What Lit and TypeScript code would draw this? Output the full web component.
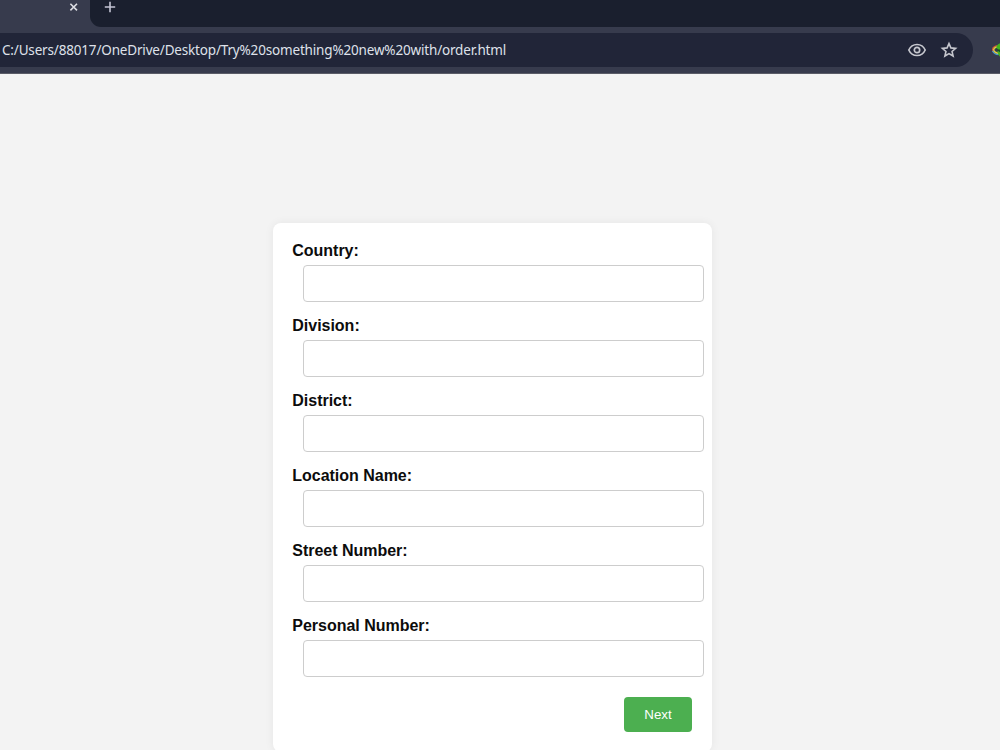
import { LitElement, html, css } from "lit";
import { customElement } from "lit/decorators.js";

@customElement("browser-chrome")
class BrowserChrome extends LitElement {
  static styles = css`
    :host { display: block; height: 74px; background: #373b4d; border-bottom: 1px solid #5a5c67; box-sizing: border-box; overflow: hidden; font-family: "Noto Sans", "Open Sans", sans-serif; }
    .tabs { display: flex; height: 27px; }
    .tab { width: 90px; display: flex; justify-content: flex-end; }
    .strip { flex: 1; background: #1a1f2e; border-bottom-left-radius: 11px; }
    svg { display: block; flex: none; }
    .bar { display: flex; height: 34px; margin-top: 6px; }
    .address { width: 973px; box-sizing: border-box; display: flex; align-items: center; background: #212538; border-radius: 0 17px 17px 0; padding: 0 14px 0 2px; }
    .url { flex: 1; font-size: 13.5px; line-height: 34px; color: #dfe1ea; white-space: nowrap; letter-spacing: -0.17px; }
    .star { margin-left: 12px; }
    .ext { margin-left: 17px; }
  `;
  render() {
    return html`
      <div class="tabs">
        <div class="tab">
          <svg width="26" height="27" viewBox="64 0 26 27"><path d="M70.4 3.8l6.6 6.6M77 3.8l-6.6 6.6" stroke="#dcdde3" stroke-width="1.6"/></svg>
        </div>
        <div class="strip">
          <svg width="40" height="27" viewBox="90 0 40 27"><path d="M110 1.8v10.4M104.8 7h10.4" stroke="#c3c4d3" stroke-width="1.6"/></svg>
        </div>
      </div>
      <div class="bar">
        <div class="address">
          <span class="url">C:/Users/88017/OneDrive/Desktop/Try%20something%20new%20with/order.html</span>
          <svg width="20" height="20" viewBox="0 0 20 20" fill="none" stroke="#c6c7ce" stroke-width="1.7"><path d="M1.8 10C3.4 6.4 6.5 4.5 10 4.5s6.6 1.9 8.2 5.5C16.6 13.6 13.5 15.5 10 15.5S3.4 13.6 1.8 10z"/><circle cx="10" cy="10" r="2.7"/></svg>
          <svg class="star" width="20" height="20" viewBox="0 0 20 20" fill="none" stroke="#c6c7ce" stroke-width="1.6"><path d="M10 3.6l1.9 4.3 4.7.45-3.55 3.1 1.05 4.6L10 13.65l-4.1 2.4 1.05-4.6-3.55-3.1 4.7-.45z"/></svg>
        </div>
        <svg class="ext" width="10" height="34" viewBox="990 33 10 34"><path d="M1001 46c-4.500-1-8.500.5-8.500 3.500s4 5 8.500 5" fill="none" stroke="#d94f3a" stroke-width="1.2"/><path d="M1001 47.2c-4-1-7.300.2-7.300 2.500s3.300 3.900 7.300 3.800" fill="none" stroke="#e0d03c" stroke-width="1.5"/><path d="M992.500 51c1.500 2.500 4 3.600 6 3.600" fill="none" stroke="#3b9fd0" stroke-width="1.2"/><path d="M1001 43c-3 .5-5 3-4.500 5l2 1.500-1 2c.5 3 2 5 3.500 6z" fill="#42b51e"/><path d="M996 49.500l4.500 3v-3z" fill="#174b25"/></svg>
      </div>`;
  }
}

@customElement("app-root")
class AppRoot extends LitElement {
  static styles = css`
    :host { display: flex; flex-direction: column; height: 750px; overflow: hidden; background: #f3f3f3; font-family: "Liberation Sans", Arial, sans-serif; }
    browser-chrome { flex: none; }
    .page { flex: 1; min-height: 0; padding: 149px 0 0 273px; }
    .card { width: 439px; height: 529px; box-sizing: border-box; background: #fff; border-radius: 8px; box-shadow: 0 0 10px rgba(0,0,0,.06); padding: 19px 8px 0 19.3px; }
    .field { height: 75px; }
    label { display: block; height: 23px; line-height: 18px; font-size: 16px; font-weight: bold; color: #0c0c0c; letter-spacing: -0.02px; }
    input { display: block; box-sizing: border-box; width: 401px; height: 37px; margin: 0 0 0 10.7px; border: 1px solid #cdcdcd; border-radius: 4px; padding: 8px; background: #fff; outline: none; }
    .actions { display: flex; justify-content: flex-end; padding: 5px 12px 0 0; }
    button { width: 68px; height: 35px; padding: 0; border: 0; border-radius: 4px; background: #4caf50; color: #fff; font: 13.333px "Liberation Sans", Arial, sans-serif; }
  `;
  render() {
    const fields = ["Country", "Division", "District", "Location Name", "Street Number", "Personal Number"];
    return html`
      <browser-chrome></browser-chrome>
      <main class="page">
        <form class="card">
          ${fields.map((name, i) => html`<div class="field"><label for="f${i}">${name}:</label><input id="f${i}" type="text"></div>`)}
          <div class="actions"><button type="button">Next</button></div>
        </form>
      </main>`;
  }
}
